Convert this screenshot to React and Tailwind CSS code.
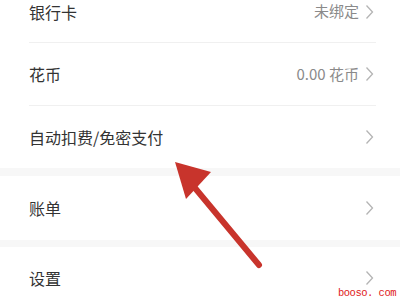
import React from "react";

const font = { fontFamily: '"Noto Sans CJK SC", "Noto Sans", sans-serif' };

function Chevron() {
  return (
    <svg width="9" height="16" viewBox="0 0 9 16" className="shrink-0">
      <path d="M1.5 1.5 L7.5 8 L1.5 14.5" fill="none" stroke="#b4b4b4" strokeWidth="1.3" />
    </svg>
  );
}

function Row({ label, value, className = "" }) {
  return (
    <div className={`flex items-center justify-between pl-[29px] pr-[26px] ${className}`}>
      <span className="text-[16px] text-[#333333]">{label}</span>
      <div className="flex items-center gap-[6px]">
        {value && <span className="text-[15px] text-[#8a8a8a]">{value}</span>}
        <Chevron />
      </div>
    </div>
  );
}

export default function App() {
  return (
    <div className="relative w-[400px] h-[300px] overflow-hidden bg-white" style={font}>
      <div className="-mt-[19px] flex flex-col">
        <Row label="银行卡" value="未绑定" className="h-[61px]" />
        <div className="ml-[29px] mr-[24px] h-px bg-[#f0f0f0]" />
        <Row label="花币" value="0.00 花币" className="h-[62px]" />
        <div className="ml-[29px] mr-[24px] h-px bg-[#f0f0f0]" />
        <Row label="自动扣费/免密支付" className="h-[62px]" />
        <div className="h-[8px] bg-[#f7f7f7]" />
        <Row label="账单" className="h-[64px]" />
        <div className="h-[7px] bg-[#f7f7f7]" />
        <Row label="设置" className="h-[62px]" />
      </div>

      {/* red annotation arrow */}
      <svg className="absolute left-0 top-0" width="400" height="300" viewBox="0 0 400 300">
        <line x1="190" y1="182" x2="259" y2="265" stroke="#c8342c" strokeWidth="6" strokeLinecap="round" />
        <polygon points="175,162 211,172 186,199" fill="#c8342c" />
      </svg>

      <span
        className="absolute right-[4px] bottom-[2px] text-[10.5px] leading-none tracking-[-0.5px] text-[#e0201a]"
        style={{ fontFamily: '"Liberation Mono", monospace' }}
      >
        booso. com
      </span>
    </div>
  );
}
